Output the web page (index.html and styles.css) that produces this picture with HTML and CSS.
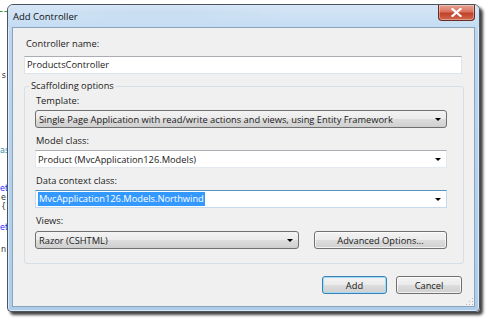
FILE: index.html
```html
<!DOCTYPE html>
<html lang="en">
<head>
  <meta charset="UTF-8">
  <title>Add Controller</title>
  <link rel="stylesheet" href="styles.css">
</head>
<body>

<div class="desk">
  <div class="code">
    <div class="ln dash"></div>
    <div class="ln l2">s</div>
    <div class="ln l3 type">as</div>
    <div class="ln l4 kw">et</div>
    <div class="ln l5">e</div>
    <div class="ln l6">{</div>
    <div class="ln l7 kw">et</div>
    <div class="ln l8">n</div>
  </div>

  <div class="window">
    <div class="titlebar">
      <span class="title">Add Controller</span>
      <a href="javascript:void(0);" class="close">
        <svg width="11" height="9" viewBox="0 0 11 9">
          <path d="M1.5 1 L9.5 8 M9.5 1 L1.5 8" stroke="#fff" stroke-width="2.2" stroke-linecap="square"/>
        </svg>
      </a>
    </div>

    <div class="client">
      <div class="lbl first">Controller name:</div>
      <div class="textbox">ProductsController</div>

      <fieldset class="group">
        <legend>Scaffolding options</legend>

        <div class="lbl">Template:</div>
        <div class="combo drop">
          <span>Single Page Application with read/write actions and views, using Entity Framework</span>
          <i class="arrow"></i>
        </div>

        <div class="lbl">Model class:</div>
        <div class="combo edit">
          <span>Product (MvcApplication126.Models)</span>
          <i class="arrow"></i>
        </div>

        <div class="lbl">Data context class:</div>
        <div class="combo edit focus">
          <span class="sel">MvcApplication126.Models.Northwind</span>
          <i class="arrow"></i>
        </div>

        <div class="lbl">Views:</div>
        <div class="views-row">
          <div class="combo drop views">
            <span>Razor (CSHTML)</span>
            <i class="arrow"></i>
          </div>
          <a href="javascript:void(0);" class="push adv">Advanced Options...</a>
        </div>
      </fieldset>

      <div class="actions">
        <a href="javascript:void(0);" class="push default">Add</a>
        <a href="javascript:void(0);" class="push">Cancel</a>
      </div>
      <div class="grip"></div>
    </div>
  </div>
</div>

</body>
</html>
```

FILE: styles.css
```css
* {
  margin: 0;
  padding: 0;
  box-sizing: border-box;
}
body {
  background-color: #fff;
  font-family: "Open Sans", "Noto Sans", sans-serif;
  font-size: 9.3px;
  color: #1a1a1a;
}
.desk {
  display: flex;
  width: 491px;
  height: 326px;
  overflow: hidden;
}

/* code editor peeking out on the left */
.code {
  width: 7px;
  flex-shrink: 0;
  font-family: "DejaVu Sans", sans-serif;
  font-size: 8px;
  line-height: 9px;
  color: #333;
  white-space: nowrap;
}
.code .ln {
  height: 9px;
  text-align: right;
  padding-right: 1px;
}
.code .dash {
  margin-top: 11px;
  height: 1px;
  border-top: 1px dashed #3a9a3a;
}
.code .l2 { margin-top: 59px; }
.code .l3 { margin-top: 66px; }
.code .l4 { margin-top: 29px; }
.code .l7 { margin-top: 12px; }
.code .l8 { margin-top: 13px; }
.code .type { color: #2b91af; }
.code .kw { color: #1a1aff; }

/* window frame */
.window {
  margin-top: 4px;
  width: 473px;
  height: 308px;
  flex-shrink: 0;
  border: 1px solid #4a5560;
  border-radius: 6px 6px 4px 4px;
  padding: 0 4px 4px 4px;
  background: linear-gradient(180deg, #c9def2 0%, #bcd6f0 10%, #aecde9 100%);
  box-shadow: 3px 3px 3px rgba(0,0,0,.75), inset 0 0 0 1px rgba(255,255,255,.55);
  display: flex;
  flex-direction: column;
}
.titlebar {
  height: 22px;
  display: flex;
  align-items: flex-start;
  justify-content: space-between;
  background: radial-gradient(ellipse 140px 10px at 150px 9px, rgba(200,220,240,.9), rgba(255,255,255,0)),
              linear-gradient(180deg, #d6e6f6 0%, #c4dcf2 100%);
  margin: 0 -4px;
  padding: 0 4px 0 5px;
  border-radius: 5px 5px 0 0;
}
.title {
  font-size: 9.5px;
  line-height: 14px;
  margin-top: 5px;
  color: #111;
}
.close {
  width: 37px;
  height: 16px;
  display: flex;
  align-items: center;
  justify-content: center;
  border: 1px solid #6b2a22;
  border-top: none;
  border-radius: 0 0 4px 4px;
  background: linear-gradient(180deg, #e8a493 0%, #d9735d 45%, #c2402a 55%, #cf6a4e 100%);
  box-shadow: inset 0 0 0 1px rgba(255,255,255,.35);
}

/* client area */
.client {
  flex: 1;
  position: relative;
  background-color: #f0f0f0;
  border: 1px solid #8aa4bf;
  padding: 9px 12px 0 11px;
}
.lbl {
  line-height: 14px;
  margin-bottom: 2px;
  padding-left: 1px;
}
.lbl.first {
  padding-left: 2px;
  margin-bottom: 5px;
}
.textbox {
  height: 18px;
  line-height: 16px;
  background-color: #fff;
  border: 1px solid #dde3ea;
  border-top-color: #abadb3;
  padding-left: 2px;
}
.group {
  margin-top: 5px;
  border: 1px solid #d5dfe5;
  border-radius: 3px;
  padding: 1px 16px 14px 10px;
}
.group legend {
  margin-left: -6px;
  padding: 0 2px;
  line-height: 14px;
}
.combo {
  height: 18px;
  display: flex;
  align-items: center;
  justify-content: space-between;
  padding: 0 5px 0 3px;
  margin-bottom: 6px;
  white-space: nowrap;
}
.combo.drop {
  border: 1px solid #707070;
  border-radius: 3px;
  background: linear-gradient(180deg, #f3f3f3 0%, #ebebeb 48%, #dddddd 52%, #cfcfcf 100%);
}
.combo.edit {
  background-color: #fff;
  border: 1px solid #e3e9ef;
  border-top-color: #abadb3;
  padding-left: 2px;
}
.combo.focus {
  border-color: #c5daed;
  border-top-color: #5794bf;
}
.sel {
  background-color: #3399ff;
  color: #fff;
  padding: 0 1px;
  line-height: 14px;
}
.arrow {
  width: 0;
  height: 0;
  border-left: 3px solid transparent;
  border-right: 3px solid transparent;
  border-top: 3px solid #000;
}
.views-row {
  display: flex;
  gap: 15px;
  margin-top: 3px;
}
.views {
  width: 264px;
  margin-bottom: 0;
}
.push {
  height: 18px;
  display: flex;
  align-items: center;
  justify-content: center;
  border: 1px solid #707070;
  border-radius: 3px;
  background: linear-gradient(180deg, #f3f3f3 0%, #ebebeb 48%, #dddddd 52%, #cfcfcf 100%);
  box-shadow: inset 0 0 0 1px rgba(255,255,255,.7);
  text-decoration: none;
  color: #1a1a1a;
}
.adv {
  width: 133px;
}
.actions {
  display: flex;
  justify-content: flex-end;
  gap: 9px;
  margin-top: 12px;
}
.actions .push {
  width: 66px;
}
.push.default {
  width: 65px;
  border-color: #3c7fb1;
  box-shadow: inset 0 0 0 1px #9fdcf7;
}
.grip {
  position: absolute;
  right: 1px;
  bottom: 1px;
  width: 8px;
  height: 8px;
  background:
    radial-gradient(circle, #b8b8b8 0.8px, transparent 1px) 0 0 / 3px 3px;
  clip-path: polygon(100% 0, 100% 100%, 0 100%);
}
```
